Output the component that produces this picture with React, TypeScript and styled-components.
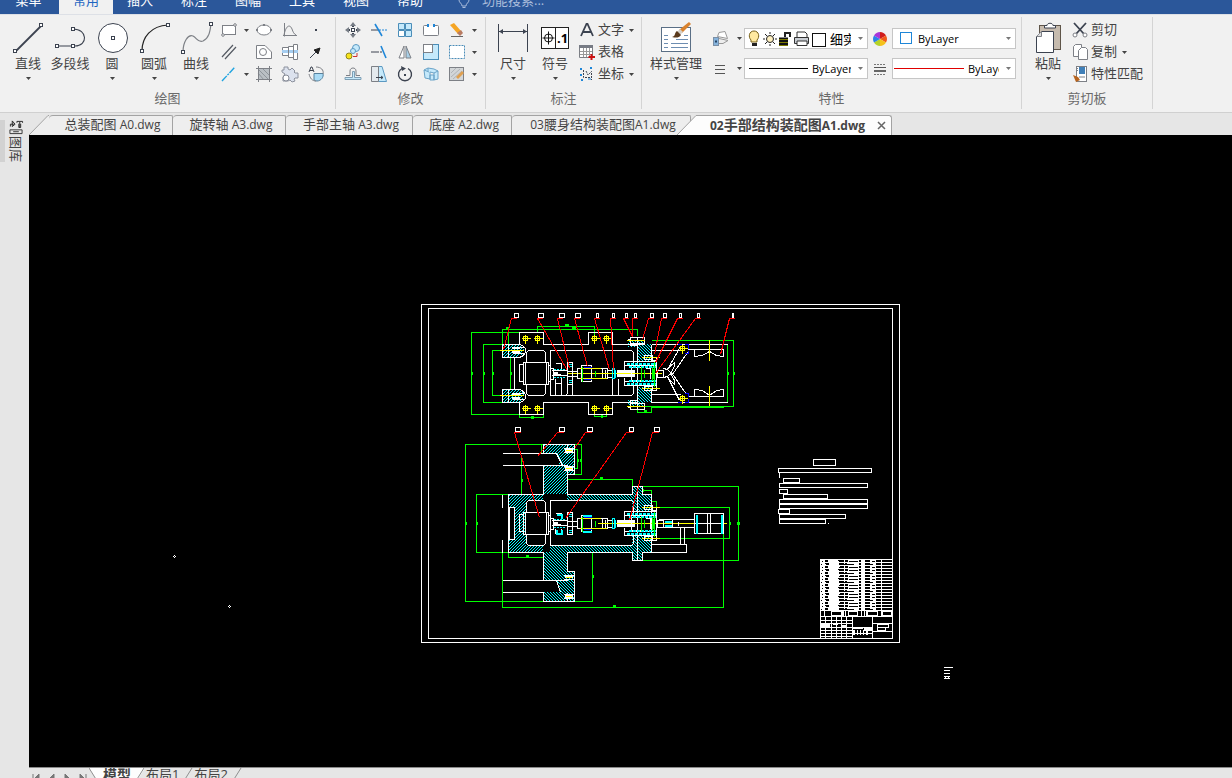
import React from "react";
import styled, { createGlobalStyle } from "styled-components";

const INK = "#3c4350";
const GREY = "#7d8086";
const BLUE = "#1e86d8";
const SKY = "#c5e9fb";

const GlobalStyle = createGlobalStyle`
  * { box-sizing: border-box; }
  html, body { margin: 0; padding: 0; }
  body, button, input, select {
    font-family: "Open Sans", "Noto Sans CJK SC", sans-serif;
    font-size: 13px;
    color: #444;
  }
  button { border: 0; padding: 0; background: none; cursor: default; }
  svg { display: block; }
`;

const Window = styled.div`
  display: flex;
  flex-direction: column;
  height: 100vh;
  overflow: hidden;
  background: #e6e6e6;
`;

/* ---------- menu bar ---------- */

const MenuBar = styled.nav`
  display: flex;
  flex: none;
  align-items: flex-end;
  height: 14px;
  overflow: hidden;
  background: #2b579a;
`;

const MenuItem = styled.button<{ $active?: boolean; $wide?: boolean }>`
  flex: none;
  width: ${(p) => (p.$wide ? 59 : 54)}px;
  height: 28px;
  padding-right: ${(p) => (p.$wide ? 2 : 0)}px;
  line-height: 28px;
  color: ${(p) => (p.$active ? "#1f66c1" : "#fff")};
  background: ${(p) => (p.$active ? "#f1f1f1" : "transparent")};
`;

const Search = styled.label`
  display: flex;
  align-items: center;
  gap: 12px;
  height: 28px;
  padding-left: 21px;
`;

const SearchInput = styled.input`
  width: 120px;
  height: 28px;
  padding: 0;
  border: 0;
  outline: 0;
  background: none;
  color: #fff;
  &::placeholder { color: #a9bcdb; opacity: 1; }
`;

/* ---------- ribbon ---------- */

const Ribbon = styled.div`
  display: flex;
  flex: none;
  padding: 2px 0 3px;
  height: 99px;
  border-top: 1px solid #dde0e6;
  border-bottom: 1px solid #d0d0d0;
  background: #f1f1f1;
`;

const Group = styled.section<{ $width: number }>`
  flex: none;
  width: ${(p) => p.$width}px;
  padding-top: 2px;
  border-right: 1px solid #d4d4d4;
`;

const GroupBody = styled.div<{ $indent: number }>`
  display: flex;
  height: 66px;
  padding-left: ${(p) => p.$indent}px;
`;

const GroupLabel = styled.div`
  margin-top: 4px;
  line-height: 18px;
  text-align: center;
  color: #6a6a6a;
`;

const BigButtonRoot = styled.button<{ $width: number }>`
  display: flex;
  flex: none;
  flex-direction: column;
  align-items: center;
  width: ${(p) => p.$width}px;
  padding-top: 1px;
  white-space: nowrap;
`;

const BigLabel = styled.span`
  height: 16px;
  line-height: 14px;
`;

const ArrowBox = styled.span`
  display: flex;
  align-items: center;
  justify-content: center;
  width: 10px;
  height: 12px;
`;

const IconGrid = styled.div<{ $columns: string }>`
  display: grid;
  grid-template-columns: ${(p) => p.$columns};
  grid-auto-rows: 22px;
`;

const IconButton = styled.button`
  display: flex;
  align-items: center;
  justify-content: center;
`;

const List = styled.div`
  display: flex;
  flex-direction: column;
`;

const ListButton = styled.button`
  display: flex;
  align-items: center;
  gap: 2px;
  height: 22px;
  padding-left: 2px;
  line-height: 22px;
  white-space: nowrap;
`;

const ListLabel = styled.span`
  height: 22px;
  line-height: 20px;
`;

const PropertyGrid = styled.div`
  display: grid;
  grid-template-columns: 28px 10px 124px 24px 124px;
  grid-template-rows: 21px 21px;
  row-gap: 9px;
  padding-top: 9px;
`;

const Combo = styled.div<{ $pad: number }>`
  display: flex;
  align-items: center;
  padding-left: ${(p) => p.$pad}px;
  padding-right: 2px;
  border: 1px solid #c6c6c6;
  background: #fff;
`;

const ComboSelect = styled.select<{ $size: number; $gap: number }>`
  flex: 1;
  min-width: 0;
  width: 0;
  height: 19px;
  margin: 0 4px 0 ${(p) => p.$gap}px;
  padding: 0;
  border: 0;
  outline: 0;
  appearance: none;
  background: none;
  color: #000;
  font-size: ${(p) => p.$size}px;
  text-overflow: clip;
`;

/* ---------- workspace ---------- */

const Workspace = styled.div`
  display: flex;
  flex: 1;
  min-height: 0;
`;

const Side = styled.aside`
  flex: none;
  width: 29px;
  padding-top: 7px;
`;

const SideButton = styled.button`
  display: flex;
  width: 29px;
  height: 42px;
  border-left: 5px solid #d2d2d2;
  padding-left: 3px;
`;

const SideStack = styled.span`
  display: flex;
  flex-direction: column;
  align-items: center;
  width: 16px;
`;

const SideText = styled.span`
  flex: none;
  padding-top: 1px;
  writing-mode: vertical-rl;
  text-orientation: sideways;
  line-height: 16px;
  font-size: 13px;
  white-space: nowrap;
`;

const Documents = styled.main`
  display: flex;
  flex: 1;
  flex-direction: column;
  min-width: 0;
`;

const TabStrip = styled.div`
  display: flex;
  flex: none;
  align-items: flex-end;
  height: 22px;
`;

const Tab = styled.button<{ $width: number }>`
  flex: none;
  width: ${(p) => p.$width}px;
  height: 20px;
  padding: 0 0 2px 4px;
  border: solid #a3a3a3;
  border-width: 1px 1px 0 0;
  border-radius: 4px 2px 0 0;
  background: #eeeeee;
  line-height: 17px;
  white-space: nowrap;
`;

const ActiveTab = styled.div`
  display: flex;
  flex: none;
  align-items: center;
  width: 195px;
  height: 20px;
  padding-left: 13px;
  border: solid #a3a3a3;
  border-width: 1px 1px 0 0;
  border-radius: 0 3px 0 0;
  background: #fdfdfd;
`;

const ActiveLabel = styled.button`
  width: 162px;
  height: 19px;
  padding-bottom: 2px;
  text-align: left;
  font-size: 14px;
  font-weight: 700;
  line-height: 17px;
  white-space: nowrap;
`;

const Latin = styled.span`
  font-size: 12px;
`;

const SlantHolder = styled.span<{ $overlap?: boolean }>`
  flex: none;
  margin-left: ${(p) => (p.$overlap ? -14 : 0)}px;
`;

const CloseButton = styled.button`
  display: flex;
  align-items: center;
  justify-content: center;
  width: 18px;
  height: 18px;
`;

const Canvas = styled.div`
  flex: 1;
  min-height: 0;
  overflow: hidden;
  background: #000;
`;

const LayoutBar = styled.div`
  display: flex;
  flex: none;
  height: 11px;
  overflow: hidden;
  border-top: 1px solid #8a8a8a;
`;

const NavButton = styled.button`
  flex: none;
  width: 15px;
  height: 18px;
`;

const LayoutTab = styled.button<{ $active?: boolean }>`
  flex: none;
  height: 14px;
  line-height: 11px;
  padding: 0 1px 2px;
  font-size: ${(p) => (p.$active ? 14 : 13)}px;
  font-weight: ${(p) => (p.$active ? 700 : 400)};
  background: ${(p) => (p.$active ? "#fdfdfd" : "transparent")};
`;

/* ---------- icons ---------- */

const Arrow = ({ color = "#444" }: { color?: string }) => (
  <ArrowBox>
    <svg width="5" height="3" viewBox="0 0 5 3"><path d="M0 0H5L2.5 3Z" fill={color} /></svg>
  </ArrowBox>
);

const Handle = ({ x, y }: { x: number; y: number }) => (
  <rect x={x - 1.5} y={y - 1.5} width="3" height="3" fill="#fff" stroke={INK} />
);

const bigIcons: Record<string, React.ReactNode> = {
  line: <><path d="M5.500 31.500L31.500 5.500" stroke={INK} strokeWidth="1.8" /><Handle x={5} y={31} /><Handle x={31} y={5} /></>,
  polyline: <><path d="M5 26H23C36 26 36 9 21 9" stroke={INK} strokeWidth="1.1" fill="none" /><Handle x={5} y={26} /><Handle x={21} y={26} /><Handle x={21} y={9} /></>,
  circle: <><circle cx="19" cy="18" r="14.500" fill="#fff" stroke={INK} /><Handle x={19} y={18} /></>,
  arc: <><path d="M6 31C6 17 15 6 32 5" stroke="#222" strokeWidth="1.200" fill="none" /><Handle x={6} y={31} /><Handle x={32} y={5} /></>,
  curve: <><path d="M5 32C5 22 10 14 15 16C19 18 20 23 25 21C31 18 32 12 33 4" stroke={GREY} strokeWidth="1.200" fill="none" /><Handle x={5} y={32} /><Handle x={33} y={4} /></>,
  dimension: <><path d="M3.500 4V32M32.500 4V32M4 11.500H32" stroke={INK} /><path d="M4 11.500L8 9V14ZM32 11.500L28 9V14Z" fill={INK} /></>,
  symbol: <>
    <rect x="4.500" y="7.500" width="27" height="21" fill="#fff" stroke="#222" /><path d="M18.500 8V28" stroke="#222" />
    <circle cx="11.500" cy="18" r="4" fill="none" stroke="#111" /><path d="M5.500 18H17.500M11.500 11.500V24.500" stroke="#111" />
    <text x="20" y="23" fontFamily="Open Sans, sans-serif" fontWeight="700" fontSize="13" fill="#000">.1</text>
  </>,
  style: <>
    <rect x="3.500" y="7.500" width="29" height="24" fill="#fff" stroke="#5a6f86" />
    <path d="M6 15.500h4M6 19.500h4M6 23.500h4M6 27.500h4M13 27.500h17M13 23.500h17M18 19.500h12M26 15.500h4" stroke="#6d8db1" />
    <path d="M31 2L33 4L24 13L21 10Z" fill="#d9822e" /><path d="M22 9L25 12L22 15L19 12Z" fill="#d5d0c8" /><path d="M19 11L23 15C21 18 18 18 14 17C18 16 16 13 19 11Z" fill="#5b3a1c" />
  </>,
  paste: <>
    <rect x="9.500" y="5.500" width="21" height="24" fill="#c6bbae" stroke="#5f5549" /><path d="M14.500 8V5.500H17C17 2.500 23 2.500 23 5.500H25.500V8Z" fill="#fff" stroke={INK} />
    <path d="M6.500 16.500L11.500 11.500H23.500V32.500H6.500Z" fill="#fff" stroke={INK} /><path d="M6.500 16.500H11.500V11.500" fill="#ddd" stroke={GREY} />
  </>,
};

const smallIcons: Record<string, React.ReactNode> = {
  rect: <><rect x="2.500" y="4.500" width="13" height="9" fill="#fff" stroke={GREY} /><circle cx="3" cy="14" r="1.300" fill="#fff" stroke={GREY} /><circle cx="15" cy="4" r="1.300" fill="#fff" stroke={GREY} /></>,
  ellipse: <><ellipse cx="9" cy="9" rx="7" ry="5" fill="#fff" stroke={GREY} /><path d="M1 8h2v2H1zM15 8h2v2h-2zM8 3h2v2H8z" fill={GREY} /></>,
  parabola: <path d="M3.500 2V15.500M2 14.500H16M3 14C5 4 9 3 11 8C12 11 13 13 15 14" stroke={GREY} fill="none" />,
  point: <rect x="8" y="8" width="2" height="2" fill={INK} />,
  parallel: <path d="M2 14L13 2M5 16L16 4" stroke="#555a63" strokeWidth="1.200" />,
  region: <><path d="M1.500 2.500H10L16.500 9V15.500H1.500Z" fill="#fff" stroke={GREY} /><circle cx="8" cy="9" r="3.500" fill="#fff" stroke={GREY} /></>,
  shaft: <>
    <path d="M1.500 4.500H7.500V12.500H1.500ZM7.500 3.500H12.500V14.500H7.500ZM12.500 1.500H16.500V16.500H12.500Z" fill="#fff" stroke={GREY} />
    <path d="M1 8.500H17" stroke="#a5cdf0" strokeWidth="3" /><path d="M7.500 4V14M12.500 3V15" stroke={GREY} />
  </>,
  arrow: <><path d="M3 15L9 9" stroke={INK} /><path d="M13 5L11 11L7 7Z" fill="#222" stroke="#222" /></>,
  centerline: <path d="M2 16L15 2" stroke="#20a4e0" strokeWidth="1.400" strokeDasharray="7 1 2 1" />,
  hatch: <><rect x="3" y="3" width="12" height="12" fill="#b9bfc4" /><path d="M4 5L13 14M3 8L9 15M7 3L15 11" stroke="#8e959b" /><path d="M1 3.500H17M1 14.500H17M3.500 1V17M14.500 1V17" stroke={GREY} /></>,
  gear: <><path d="M3 2H7V4L9 5L11 3L14 6L13 7L14 8H17V13H14L13 14L14 16L11 17L9 15L7 16H2V12L4 9L1 7V5L3 5Z" fill="#dce2ee" stroke="#8d929e" /><circle cx="5" cy="13" r="3" fill="#fff" stroke="#858a96" /></>,
  local: <><path d="M7 8.500H16C17 12 14 16 10 16C8 16 7 15 7 15Z" fill="#a9dbf6" stroke="#55809c" /><path d="M9 2C14 2 17 5 16 9M2 9C3 13 5 16 9 16" fill="none" stroke={GREY} /><path d="M2 7L4 2H5L7 7M3 5.500H6" fill="none" stroke={INK} /></>,
  move: <><path d="M9 6V3M9 12V15M6 9H3M12 9H15" stroke={INK} strokeWidth="2" /><path d="M9 1L12 5H6ZM9 17L6 13H12ZM1 9L5 6V12ZM17 9L13 12V6Z" fill="#777d86" /><rect x="7.500" y="7.500" width="3" height="3" fill="#fff" stroke={INK} /></>,
  trim: <><path d="M1 9H8" stroke={INK} /><path d="M9 9H17" stroke={BLUE} strokeDasharray="2 1" /><path d="M5 3L12 15" stroke={BLUE} strokeWidth="1.600" /></>,
  array: <><path d="M2.500 2.500h6v6h-6zM9.500 9.500h6v6h-6zM9.500 2.500h6v6h-6z" fill={SKY} stroke="#4a8db8" /><path d="M2.500 9.500h6v6h-6z" fill="#fff" stroke="#4a8db8" /></>,
  stretchbox: <><rect x="1.500" y="4.500" width="15" height="10" rx="1" fill="#fff" stroke={GREY} /><path d="M6 3V6M12 3V6" stroke={BLUE} strokeWidth="2" /><path d="M7 4.500H11" stroke="#f1f1f1" /></>,
  erase: <><path d="M2 4L6 2L13 10L10 13Z" fill="#f5a524" /><path d="M9 12L13 9L15 12L12 15Z" fill="#b87b62" /><path d="M3 15.500H15" stroke="#666" /></>,
  copy2: <><circle cx="12" cy="5" r="3.500" fill={SKY} stroke="#5b99c2" /><circle cx="9" cy="8" r="2.500" fill={SKY} stroke="#5b99c2" /><circle cx="5" cy="13" r="3" fill="#f7e31a" stroke="#8f861f" /><path d="M9 13.500H13V10" stroke="#c33" fill="none" /></>,
  extend: <><path d="M1 9H7" stroke={INK} /><path d="M7 9H13" stroke={INK} strokeDasharray="2 1" /><path d="M11 3L16 15" stroke={BLUE} strokeWidth="1.600" /></>,
  mirror: <><path d="M8 3V15H3Z" fill="#fff" stroke={GREY} /><path d="M10 3V15H15Z" fill="#a9cfe6" stroke={GREY} /></>,
  scale: <><rect x="1.500" y="1.500" width="15" height="15" fill={SKY} stroke="#4a8db8" /><rect x="1.500" y="1.500" width="9" height="8" fill="#fff" stroke={GREY} /></>,
  select: <rect x="1.500" y="2.500" width="15" height="13" fill="#fff" stroke="#4a8db8" strokeDasharray="2 1" />,
  offset: <><path d="M2 10.500H6V6C6 2 12 2 12 6V10.500H16" fill="none" stroke={GREY} /><path d="M1 12.500H8.500V6.500H10.500V12.500H17V14.500H1Z" fill={SKY} stroke="#7f9fb5" /></>,
  stretch: <><path d="M8 1.500H12L16.500 16.500H8Z" fill={SKY} stroke="#5b99c2" /><path d="M1.500 1.500H8.500V16.500H1.500Z" fill="#e5eaee" stroke={GREY} /><path d="M6 12.500H13M11 11L13 12.500L11 14" stroke={INK} fill="none" /></>,
  rotate: <><path d="M12 3.500A6.500 6.500 0 1 1 6 3.500" fill="none" stroke={INK} strokeWidth="1.400" /><path d="M5 1L10 3.500L6 6Z" fill={INK} /><rect x="8" y="9" width="2" height="2" fill={INK} /></>,
  block: <path d="M2 5L6 3L12 4L16 6V14L12 15V8L8 7V14L3 13ZM2 5L7 7M6 3V6M12 8L16 6M8 10H12V15H8Z" fill={SKY} stroke="#6aa3c8" />,
  edithatch: <><rect x="1.500" y="2.500" width="14" height="13" fill="#d3d6d8" stroke={GREY} /><path d="M3 12L12 4M5 14L14 6M3 8L8 3" stroke="#b0b4b8" /><path d="M8 12L14 6L16 8L10 14Z" fill="#e0a050" /></>,
  text: <path d="M3 15L8.500 3H9.500L15 15M5 11H13" fill="none" stroke={INK} strokeWidth="1.800" />,
  table: <><path d="M1.500 2.500H14.500V14.500H1.500Z" fill="#fff" stroke={GREY} /><rect x="1" y="2" width="14" height="3" fill="#777b84" /><path d="M2 8.500H14M2 11.500H14M5.500 5V14M8.500 5V14M11.500 5V14" stroke="#999" /><path d="M13.500 11V17M10.500 14H17" stroke="#c11" strokeWidth="2" /></>,
  coord: <><path d="M5.500 5V12.500H13M8 6L10 10L14 6M13.500 8V15" stroke={INK} fill="none" strokeDasharray="2 1" /><path d="M2 3l2 2M4 3L2 5M12 2l2 2M14 2l-2 2M2 9l2 2M4 9l-2 2M3 14l2 2M5 14l-2 2M10 14h3" stroke={BLUE} /></>,
  cut: <><path d="M3 2L13 13M15 2L5 13" stroke={INK} strokeWidth="1.800" /><circle cx="4" cy="14" r="2" fill="#fff" stroke={GREY} /><circle cx="14" cy="14" r="2" fill="#fff" stroke={GREY} /></>,
  copy: <><path d="M2.500 3.500L4.500 1.500H10.500V13.500H2.500Z" fill="#fff" stroke={GREY} /><path d="M7.500 7.500L10.500 4.500H14.500L16.500 6.500V16.500H7.500Z" fill="#fff" stroke={GREY} /></>,
  match: <><rect x="5.500" y="1.500" width="10" height="15" fill="#fff" stroke={GREY} /><rect x="8" y="2" width="6" height="7" fill="#4180b8" /><path d="M7 3.500H5M7 5.500H5M8 12H14" stroke={GREY} /><path d="M2 10L7 12L9 15L5 17Z" fill="#b7641f" /></>,
  layers: <><path d="M6.500 6.500L8 2.500L14 1.500L16.500 8.500Z" fill="#fff" stroke="#999" /><path d="M8 8.500L17 10.500L12 13.500H8" fill="#eee" stroke="#999" /><rect x="2.500" y="7.500" width="5" height="8" fill="#86b3dc" stroke="#7a8fa6" /><path d="M4 11.500H6" stroke="#246" strokeWidth="2" /></>,
  lines: <path d="M4 5.500H14M4 9.500H14M4 13.500H14" stroke="#555" />,
  weights: <><path d="M3 4.500H15M3 14.500H15" stroke="#777" strokeDasharray="2 1" /><path d="M3 7.500H15" stroke="#555" /><path d="M3 11H15" stroke="#666" strokeWidth="2" /></>,
  wheel: <>
    <path d="M9 9V2A7 7 0 0 1 15 5.500Z" fill="#d01c1c" /><path d="M9 9L15 5.500A7 7 0 0 1 15 12.500Z" fill="#f05a1b" /><path d="M9 9L15 12.500A7 7 0 0 1 9 16Z" fill="#f5c21b" />
    <path d="M9 9V16A7 7 0 0 1 3 12.500Z" fill="#b5d32a" /><path d="M9 9L3 12.500A7 7 0 0 1 3 5.500Z" fill="#2a82e8" /><path d="M9 9L3 5.500A7 7 0 0 1 9 2Z" fill="#a834d8" />
  </>,
};

const Small = ({ name }: { name: string }) => (
  <svg width="18" height="18" viewBox="0 0 18 18" fill="none">{smallIcons[name]}</svg>
);

const BigButton = ({ icon, label, width = 42, arrow = true }: { icon: string; label: string; width?: number; arrow?: boolean }) => (
  <BigButtonRoot $width={width}>
    <svg width="36" height="36" viewBox="0 0 36 36" fill="none">{bigIcons[icon]}</svg>
    <BigLabel>{label}</BigLabel>
    {arrow && <Arrow />}
  </BigButtonRoot>
);

const ListItem = ({ icon, label, arrow }: { icon: string; label: string; arrow?: boolean }) => (
  <ListButton>
    <Small name={icon} />
    <ListLabel>{label}</ListLabel>
    {arrow && <Arrow />}
  </ListButton>
);

const LayerState = () => (
  <svg width="80" height="19" viewBox="0 0 80 19" fill="none">
    <path d="M3 13V11C0 8 1 2 6 2S12 8 9 11V13Z" fill="#ffe9a0" stroke="#77611b" /><path d="M4 14h5v3H4Z" fill="#222" />
    <circle cx="22" cy="10" r="3.500" fill="#fff0c0" stroke="#222" /><path d="M22 3V5M22 15V17M15 10H17M27 10H29M17 5L19 7M25 13L27 15M17 15L19 13M25 7L27 5" stroke="#222" />
    <path d="M31 8.500H40V17H31Z" fill="#111" /><path d="M31 10.500H40M31 13.500H40M31 16.500H40" stroke="#7d7a00" /><path d="M37 8V4H42V8" stroke="#222" strokeWidth="2" />
    <path d="M49 8V3H57L59 5V8" fill="#fff" stroke="#333" /><path d="M46.500 8.500H60.500V14.500H46.500Z" fill="#c9cdd3" stroke="#333" /><path d="M49 12h10v4.500H49Z" fill="#fff" stroke="#333" />
    <rect x="64.500" y="4.500" width="13" height="13" fill="#fff" stroke="#111" />
  </svg>
);

const Slant = ({ fill }: { fill: string }) => (
  <svg width="20" height="20" viewBox="0 0 20 20">
    <path d="M0 20L19 0.500H20V20Z" fill={fill} /><path d="M0 20L19 0.500H20" fill="none" stroke="#a3a3a3" />
  </svg>
);

const SheetEdge = ({ reverse, from, to }: { reverse?: boolean; from: string; to: string }) => (
  <svg width="13" height="16" viewBox="0 0 13 16">
    <rect width="13" height="16" fill={from} />
    <path d={reverse ? "M0 0L10 16H13V0Z" : "M13 0L3 16H13Z"} fill={to} />
    <path d={reverse ? "M0 0L10 16" : "M12 0L2 16"} stroke="#8f8f8f" />
  </svg>
);

/* ---------- mechanical drawing ---------- */

const G = "#00ff00";
const R = "#ff0000";
const C = "#00ffff";
const Y = "#ffff00";

const leadersTop: number[][] = [
  [514, 4, 511, 503, 349], [538, 5, 537, 567, 370], [559, 5, 557, 569, 368], [575, 5, 574, 587, 366],
  [596, 2, 594, 609, 369], [612, 2, 610, 613, 370], [625, 2, 623, 632, 336], [634, 2, 632, 632, 336],
  [650, 3, 648, 642, 339], [663, 3, 661, 654, 354], [679, 2, 677, 655, 362], [697, 2, 695, 655, 373], [732, 1, 729, 720, 354],
];

const leadersFront: number[][] = [
  [515, 5, 514, 539, 517], [559, 5, 557, 537, 456], [587, 5, 585, 574, 448], [629, 4, 626, 565, 518], [654, 5, 652, 629, 520],
];

const noteLines: number[][] = [
  [813, 459, 22, 6], [778, 468, 93, 4], [783, 478, 16, 4], [779, 483, 88, 4], [779, 489, 8, 4], [783, 494, 44, 4],
  [779, 499, 88, 4], [779, 504, 88, 4], [778, 509, 11, 4], [779, 514, 66, 4], [779, 519, 46, 4],
];

const boltsY = [338, 408];
const boltsX = [525, 537, 594, 606];

const Target = ({ x, y }: { x: number; y: number }) => (
  <path d={`M${x - 4} ${y}H${x + 5}M${x} ${y - 4}V${y + 5}M${x - 2} ${y - 2}h4v4h-4z`} stroke={Y} />
);

/* gearbox, coupling and bearing stack shared by the two views */
const Spindle = () => (
  <g>
    <path d="M523 362H548V384H523ZM519 364H523V381H519ZM525 362V384M546 362V384M548 365H550V381H548M550 368H553V379H550" />
    <path d="M551 370H566M551 375H566M566 371H577M566 376H577M555 363H561V368M561 378V383H555V378" />
    <path d="M552 372H557M552 374H560" strokeWidth="2" />
    <path d="M553 369H565M553 377H565" stroke={C} strokeDasharray="2 1" />
    <path d="M567 362H572V384H567Z" />
    <path d="M568 364H571M568 366H571M568 380H571M568 382H571" stroke={C} />
    <path d="M577 368H607V378H577ZM581 365H591V381H581ZM602 368V378M605 369V377M607 370H612V377H607" />
    <path d="M579 368H600M579 378H606M597 373H607" stroke={Y} />
    <path d="M583 367H591M583 379H591" stroke="#0000ff" />
    <path d="M582 366V381M595 370V376" stroke={G} />
    <path d="M612 368H614V378H612ZM615 369V377" stroke={C} />
    <path d="M624 361H656V365H624ZM624 381H656V385H624ZM624 361V369M624 377V385M631 367H641V380H631ZM645 368H650V378M656 357V390M652 357V360H656M652 387V390H656" />
    <path d="M626 363H655M628 366H655M626 383H655M628 380H655" stroke={C} strokeWidth="2" strokeDasharray="3 1" />
    <path d="M641 366V380M644 369V377M654 361V386M652 366V380" stroke={G} />
    <path d="M653 368V378" stroke={G} strokeWidth="3" />
    <path d="M641 357H659M641 388H659" stroke={Y} />
    <path d="M644 355H652V359H644ZM644 386H652V390H644ZM657 370H663V377H657Z" />
  </g>
);

const Drawing = () => (
  <svg width="100%" height="100%" role="img" aria-label="02手部结构装配图A1" fill="none" shapeRendering="crispEdges">
    <defs>
      <pattern id="hatchUp" width="3" height="3" patternUnits="userSpaceOnUse">
        <path d="M0 2h1v1H0zM1 1h1v1H1zM2 0h1v1H2z" fill={C} />
      </pattern>
      <pattern id="hatchDown" width="3" height="3" patternUnits="userSpaceOnUse">
        <path d="M0 0h1v1H0zM1 1h1v1H1zM2 2h1v1H2z" fill={C} />
      </pattern>
    </defs>

    {/* section fills */}
    <g transform="translate(-29 -135)">
      <path d="M503 344h16c8 2 5 12-2 13h-14zM503 390h16c8 2 5 12-2 13h-14z" fill="url(#hatchUp)" />
      <path d="M637 340h7v4h7v17h-14zM637 387h14v15h-7v4h-7zM628 340h8v7h-8zM628 400h8v7h-8z" fill="url(#hatchDown)" />
      <path d="M543 444H567V494H508V552H543V545H550V500H567V444H574V474H567V545H543Z" fill="url(#hatchUp)" />
      <path d="M567 494H632V500H567ZM550 545H632V552H550ZM543 552H567V601H543ZM567 571H574V601H567ZM632 486H642V494H651V511H632ZM632 536H651V552H642V560H632Z" fill="url(#hatchDown)" />
      <path d="M502 454h54l4 11h-58zM502 581h54l4 11h-58zM509 507h5v32h-5zM526 500h19v45h-19zM551 501H582V545H551Z" fill="#000" />
      <path d="M617 370h18v7h-18zM617 520h18v7h-18z" fill="#fff" />
      <path d="M512 347h8v2h-8zM512 351h8v2h-8zM512 393h8v2h-8zM512 397h8v2h-8zM565 449h8v3h-8zM565 467h8v3h-8zM565 575h8v3h-8zM565 595h8v3h-8z" fill="#fff" />
    </g>

    {/* line work, centred on pixels */}
    <g transform="translate(-28.5 -134.5)" stroke="#fff">
      <path d="M421 304H899V642H421ZM428 308H892V638H428Z" />

      <g stroke={G}>
        <path d="M520 332H471V414H520M502 344H483V402H502M502 350H492V395H502M510 357V389M502 355V329H637V335M508 331V344M537 332V326H594V338" />
        <path d="M519 410V417H543V410M594 411V416H606V411M651 340H733V406H637V412H651V406M651 344H727V402M723 407H651" />
        <path d="M543 444H465V601H592V552H573M555 444H581V474H574M574 449H577V468H574M508 494H476V552H508M521 454V494M567 479H632V487M508 552V557H543" />
        <path d="M502 552V607H723V532M637 486H738V560H637M657 507H729V538H657M642 494V490H651V494M651 501H656V507M541 444V453" />
      </g>
      <path d="M470 373h2M482 373h2M491 373h2M726 373h2M732 373h2M464 523h2M475 523h2M520 480h2M576 460h2M579 460h2M591 576h2M728 523h2M736 523h3M509 373h2M505 328h3M564 325h4M571 328h4M530 417h3M600 416h2M643 411h3M599 478h3M612 606h3M525 556h3M641 490h2" stroke={G} strokeWidth="3" />

      {/* plan view */}
      <path d="M519 344V332H543V344H588V332H612V344H637M519 402V414H543V402H588V414H612V402H637" />
      <path d="M502 344H519C528 346 526 356 518 357H502ZM502 389H518C526 390 528 400 519 402H502ZM514 357V389M508 344V357M508 389V402M512 347H523M512 353H523M512 393H523M512 399H523" />
      <path d="M526 362V352L528 350H543L545 352V362M526 384V393L528 395H543L545 393V384M550 365V350H631L633 352V367M550 381V395H631L633 393V380M555 383V395M561 377V395M567 384V393L565 395M572 384V395M612 378V395M618 378V395" />
      <path d="M637 337V409M651 344V361M651 387V402M637 344H644M630 337H644V343H630ZM630 403H644V409H630ZM627 339H630V345H636M627 407H630V400H636" />
      <path d="M499 350H523M499 395H523M626 340H644M626 406H644M567 373H661" stroke={Y} />
      <Spindle />
      <path d="M651 344H727M651 402H727M687 349H723V356L716 355L709 351L702 355L694 356V349M687 396H723V389L716 390L709 395L702 390L694 389V396M651 350H680M651 394H680" />
      <path d="M663 368L667 369L680 346M667 369L672 374L687 352M663 377L667 376L679 400M667 376L671 372L686 394M666 369L674 362V366L670 373L674 380V384L666 376" />
      <path d="M677 344h4M684 344h4v4M688 350v3h-4M677 402h4M684 402h4v-4M688 396v-3h-4" stroke="#0000ff" />
      <path d="M709 339V360M709 385V405" stroke={Y} />
      {boltsY.map((y) => boltsX.map((x) => <Target key={`${x}-${y}`} x={x} y={y} />))}
      <Target x={682} y={348} />
      <Target x={682} y={398} />

      {/* front section */}
      <path d="M543 453V444H574V474H567V494H632V486H642V494H651V552H642V560H632V552H567V571H574V601H543V592M543 465V494H508V552H543V580" />
      <path d="M502 453H556L562 465M502 465H567V474M502 580H556L560 592M502 592H543M543 580H567M502 494V507M502 539V552M509 507H514V539H509ZM567 444V453M567 592V601" />
      <path d="M526 511V502L528 500H543L545 502V511M526 534V543L528 545H543L545 543V534M550 515V500H631L633 502V513M550 530V545H631L633 543V533M637 486V560M563 448H574M563 452H574M563 466H574M563 470H574M563 575H574M563 579H574M563 594H574M563 598H574" />
      <path d="M565 450H571M565 468H571M565 577H571M565 596H571M597 523H726" stroke={Y} />
      <g transform="translate(0 150)"><Spindle /></g>
      <path d="M556 514H561V518M556 529V533H561V529M582 515H591M582 531H591" stroke={C} strokeWidth="2" />
      <path d="M658 519H694M658 527H694M672 519V527M678 521V525M680 527V544M684 527V544M651 544H686V552H651M694 513H723V533H694ZM707 513V533M710 513V533M694 523H723" />
      <path d="M696 514V533M721 514V533M664 521H671M664 525H671" stroke={C} strokeWidth="2" />

      {/* item leaders */}
      {leadersTop.map(([bx, bw, lx, tx, ty]) => (
        <g key={lx}><rect x={bx} y="313" width={bw} height="4" /><path d={`M${lx + 5} 318H${lx}L${tx} ${ty}`} stroke={R} /></g>
      ))}
      {leadersFront.map(([bx, bw, lx, tx, ty]) => (
        <g key={lx}><rect x={bx} y="427" width={bw} height="4" /><path d={`M${lx + 6} 432H${lx}L${tx} ${ty}`} stroke={R} /></g>
      ))}

      {/* technical notes */}
      {noteLines.map(([x, y, w, h]) => <rect key={y} x={x} y={y} width={w} height={h} />)}
      <path d="M779 472V477M827 523H828" />
    </g>

    {/* title block, parts list and stray points */}
    <g transform="translate(-29 -135)">
      <path fill="#fff" d="M944 667h9v1h-9zM944 670h6v1h-6zM944 673h6v1h-6zM944 676h6v1h-6zM944 678h6v1h-6zM945 677h1v1h-1zM948 677h1v1h-1z" />
      <path fill="#fff" d="M174 555h1v1h-1zM173 556h1v1h-1zM175 556h1v1h-1zM174 557h1v1h-1zM229 605h1v1h-1zM228 606h1v1h-1zM230 606h1v1h-1zM229 607h1v1h-1z" />
      <rect x="820" y="559" width="73" height="57" fill="#fff" />
      {Array.from({ length: 17 }, (_, i) => {
        const y = 560 + i * 3;
        const even = i % 3 !== 1;
        return (
          <path
            key={i}
            fill="#000"
            d={`M${even ? 822 : 821} ${y + 1}h1v1h-1zM825 ${y}h${3 + (i % 2)}v2h-3zM${838 + (i % 3)} ${y}h${6 - (i % 3)}v2h-5zM845 ${y}h${even ? 3 : 2}v2h-3zM849 ${y + 1}h${even ? 9 : 5}v1h-9zM859 ${y}h2v2h-2zM865 ${y}h5v2h-5zM${even ? 872 : 870} ${y + 1}h3v1h-3zM876 ${y}h5v2h-5zM882 ${y}h10v2h-10z`}
          />
        );
      })}
      <path fill="#000" d="M821 611h3v5h-3zM825 611h6v5h-6zM832 612h9v3h-9zM844 611h1v5h-1zM846 611h2v5h-2zM849 612h8v3h-8zM858 611h3v5h-3zM862 611h2v5h-2zM865 611h1v5h-1zM868 612h9v3h-9zM878 611h3v5h-3zM883 612h8v3h-8z" />
      <path stroke="#fff" strokeWidth="1" d="M820 616.500H892M820 620.500H852M820 623.500H852M820 627.500H872M820 630.500H852M820 633.500H872M820 636.500H852M820.500 616V638M825.500 616V638M831.500 616V638M836.500 616V638M841.500 616V638M846.500 616V638M852.500 616V638M872.500 616V638M873 623.500H892M873 631.500H892M877.500 624.500H888.500V627.500H877.500ZM877.500 627.500H885.500V630.500H877.500Z" />
      <path fill="#fff" d="M821 624h9v3h-9zM833 624h5v1h-5zM841 625h6v2h-6zM853 628h10v1h-10zM864 628h8v3h-8zM853 630h2v5h-2zM857 630h1v5h-1zM860 630h1v5h-1zM863 630h1v5h-1zM866 630h2v5h-2z" />
    </g>
  </svg>
);

const menus = ["菜单", "常用", "插入", "标注", "图幅", "工具", "视图", "帮助"];

const sheets = [
  { name: "总装配图", code: " A0.dwg", width: 124 },
  { name: "旋转轴", code: " A3.dwg", width: 113 },
  { name: "手部主轴", code: " A3.dwg", width: 127 },
  { name: "底座", code: " A2.dwg", width: 99 },
  { prefix: "03", name: "腰身结构装配图", code: "A1.dwg", width: 179 },
];

const drawTools: [string, string, boolean?][][] = [
  [["rect", "矩形", true], ["ellipse", "椭圆"], ["parabola", "公式曲线"], ["point", "点"]],
  [["parallel", "平行线"], ["region", "填充"], ["shaft", "孔/轴"], ["arrow", "箭头"]],
  [["centerline", "中心线", true], ["hatch", "剖面线"], ["gear", "齿形"], ["local", "局部放大图"]],
];

const editTools: [string, string][][] = [
  [["move", "平移"], ["trim", "裁剪"], ["array", "阵列"], ["stretchbox", "打断"], ["erase", "删除"]],
  [["copy2", "平移复制"], ["extend", "延伸"], ["mirror", "镜像"], ["scale", "缩放"], ["select", "分解"]],
  [["offset", "等距线"], ["stretch", "拉伸"], ["rotate", "旋转"], ["block", "块"], ["edithatch", "编辑"]],
];

const navShapes = ["M4 4V14M10 4L5 9L10 14Z", "M10 4L5 9L10 14Z", "M6 4L11 9L6 14Z", "M12 4V14M6 4L11 9L6 14Z"];
const navNames = ["第一页", "上一页", "下一页", "最后一页"];

export default function App() {
  return (
    <Window>
      <GlobalStyle />
      <MenuBar>
        {menus.map((m, i) => (
          <MenuItem key={m} $active={i === 1} $wide={i === 0}>{m}</MenuItem>
        ))}
        <Search>
          <svg width="12" height="28" viewBox="0 0 12 28" fill="none">
            <path d="M1 14C1 17 4 17 4 20H8C8 17 11 17 11 14M4.500 21.500H7.500" stroke="#a9bcdb" />
          </svg>
          <SearchInput placeholder="功能搜索..." aria-label="功能搜索" />
        </Search>
      </MenuBar>

      <Ribbon>
        <Group $width={336}>
          <GroupBody $indent={7}>
            <BigButton icon="line" label="直线" />
            <BigButton icon="polyline" label="多段线" arrow={false} />
            <BigButton icon="circle" label="圆" />
            <BigButton icon="arc" label="圆弧" />
            <BigButton icon="curve" label="曲线" />
            <IconGrid $columns="24px 10px 26px 26px 26px">
              {drawTools.map((row) =>
                row.map(([icon, name, menu], i) => (
                  <React.Fragment key={icon}>
                    <IconButton aria-label={name}><Small name={icon} /></IconButton>
                    {i === 0 && (menu ? <IconButton aria-label={`${name}选项`}><Arrow /></IconButton> : <span />)}
                  </React.Fragment>
                ))
              )}
            </IconGrid>
          </GroupBody>
          <GroupLabel>绘图</GroupLabel>
        </Group>

        <Group $width={150}>
          <GroupBody $indent={4}>
            <IconGrid $columns="26px 26px 26px 26px 26px 8px">
              {editTools.map((row) =>
                row.map(([icon, name], i) => (
                  <React.Fragment key={icon}>
                    <IconButton aria-label={name}><Small name={icon} /></IconButton>
                    {i === 4 && <IconButton aria-label={`${name}选项`}><Arrow /></IconButton>}
                  </React.Fragment>
                ))
              )}
            </IconGrid>
          </GroupBody>
          <GroupLabel>修改</GroupLabel>
        </Group>

        <Group $width={156}>
          <GroupBody $indent={6}>
            <BigButton icon="dimension" label="尺寸" />
            <BigButton icon="symbol" label="符号" />
            <List>
              <ListItem icon="text" label="文字" arrow />
              <ListItem icon="table" label="表格" />
              <ListItem icon="coord" label="坐标" arrow />
            </List>
          </GroupBody>
          <GroupLabel>标注</GroupLabel>
        </Group>

        <Group $width={380}>
          <GroupBody $indent={4}>
            <BigButton icon="style" label="样式管理" width={60} />
            <PropertyGrid>
              <IconButton aria-label="图层"><Small name="layers" /></IconButton>
              <IconButton aria-label="图层选项"><Arrow /></IconButton>
              <Combo $pad={3}>
                <LayerState />
                <ComboSelect $size={13} $gap={2} aria-label="当前图层"><option>细实线层</option></ComboSelect>
                <Arrow color="#777" />
              </Combo>
              <IconButton aria-label="颜色"><Small name="wheel" /></IconButton>
              <Combo $pad={7}>
                <svg width="13" height="13" viewBox="0 0 13 13"><rect x="0.500" y="0.500" width="11" height="11" fill="#fff" stroke={BLUE} /></svg>
                <ComboSelect $size={11} $gap={5} aria-label="当前颜色"><option>ByLayer</option></ComboSelect>
                <Arrow color="#777" />
              </Combo>
              <IconButton aria-label="线型"><Small name="lines" /></IconButton>
              <IconButton aria-label="线型选项"><Arrow /></IconButton>
              <Combo $pad={4}>
                <svg width="59" height="3" viewBox="0 0 59 3"><path d="M0 1.500H59" stroke="#000" /></svg>
                <ComboSelect $size={11} $gap={4} aria-label="当前线型"><option>ByLayer</option></ComboSelect>
                <Arrow color="#777" />
              </Combo>
              <IconButton aria-label="线宽"><Small name="weights" /></IconButton>
              <Combo $pad={1}>
                <svg width="70" height="3" viewBox="0 0 70 3"><path d="M0 1.500H70" stroke="#e00000" /></svg>
                <ComboSelect $size={11} $gap={4} aria-label="当前线宽"><option>ByLayer</option></ComboSelect>
                <Arrow color="#777" />
              </Combo>
            </PropertyGrid>
          </GroupBody>
          <GroupLabel>特性</GroupLabel>
        </Group>

        <Group $width={131}>
          <GroupBody $indent={5}>
            <BigButton icon="paste" label="粘贴" />
            <List>
              <ListItem icon="cut" label="剪切" />
              <ListItem icon="copy" label="复制" arrow />
              <ListItem icon="match" label="特性匹配" />
            </List>
          </GroupBody>
          <GroupLabel>剪切板</GroupLabel>
        </Group>
      </Ribbon>

      <Workspace>
        <Side>
          <SideButton>
            <SideStack>
              <svg width="16" height="16" viewBox="0 0 16 16" fill="none">
                <path d="M2 7V4.500H6M4 1L7 4.500L4 7Z" stroke="#222" /><path d="M9 3V1.500H15V3M12 2V8M11 4V8H13V4" stroke="#222" /><path d="M1.500 10.500H14.500V14.500H1.500ZM5 12.500H11" stroke="#333" />
              </svg>
              <SideText>图库</SideText>
            </SideStack>
          </SideButton>
        </Side>
        <Documents>
          <TabStrip>
            <SlantHolder><Slant fill="#eeeeee" /></SlantHolder>
            {sheets.map((s) => (
              <Tab key={s.name} $width={s.width}>
                {s.prefix && <Latin>{s.prefix}</Latin>}{s.name}<Latin>{s.code}</Latin>
              </Tab>
            ))}
            <SlantHolder $overlap><Slant fill="#fdfdfd" /></SlantHolder>
            <ActiveTab>
              <ActiveLabel><Latin>02</Latin>手部结构装配图<Latin>A1.dwg</Latin></ActiveLabel>
              <CloseButton aria-label="关闭">
                <svg width="9" height="9" viewBox="0 0 9 9"><path d="M1 1L8 8M8 1L1 8" stroke="#666" strokeWidth="1.500" /></svg>
              </CloseButton>
            </ActiveTab>
          </TabStrip>
          <Canvas><Drawing /></Canvas>
          <LayoutBar>
            {navShapes.map((d, i) => (
              <NavButton key={d} aria-label={navNames[i]}>
                <svg width="15" height="18" viewBox="0 -2 15 18"><path d={d} fill="#777" stroke="#777" strokeWidth="1" /></svg>
              </NavButton>
            ))}
            <SheetEdge reverse from="#e6e6e6" to="#fdfdfd" />
            <LayoutTab $active>模型</LayoutTab>
            <SheetEdge from="#fdfdfd" to="#e6e6e6" />
            <LayoutTab>布局1</LayoutTab>
            <SheetEdge from="#e6e6e6" to="#e6e6e6" />
            <LayoutTab>布局2</LayoutTab>
            <SheetEdge from="#e6e6e6" to="#e6e6e6" />
          </LayoutBar>
        </Documents>
      </Workspace>
    </Window>
  );
}
